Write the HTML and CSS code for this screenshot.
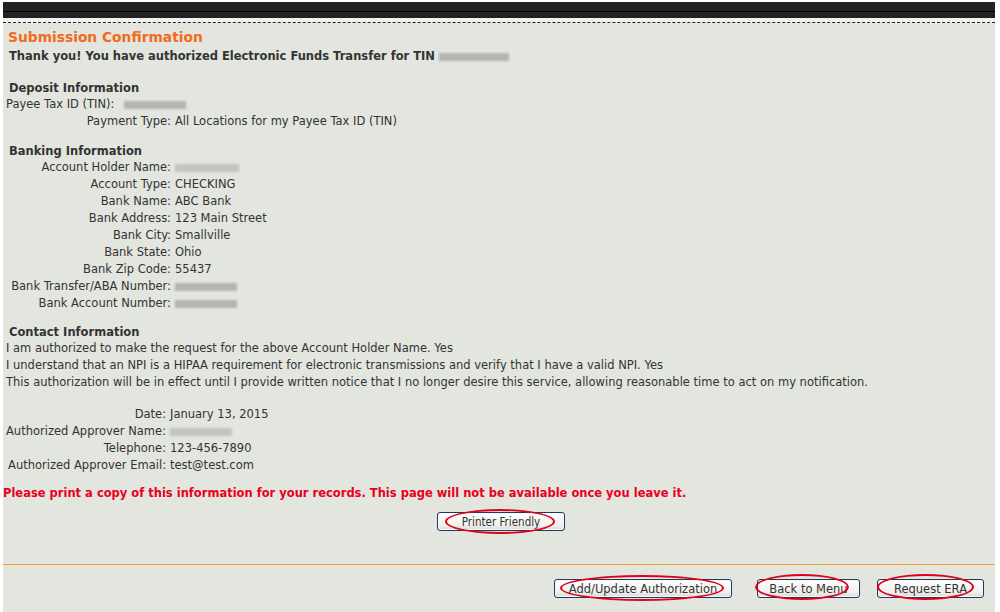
FILE: index.html
```html
<!DOCTYPE html>
<html>
<head>
<meta charset="utf-8">
<link rel="stylesheet" href="styles.css">
</head>
<body>
<div class="frame">
  <div class="topbar"><div class="topbar-line"></div></div>
  <div class="dash"></div>
  <div class="content">
    <h1 class="title">Submission Confirmation</h1>
    <p class="thanks">Thank you! You have authorized Electronic Funds Transfer for TIN <span class="blur w70"></span></p>

    <h2 class="sect first">Deposit Information</h2>
    <p class="plain">Payee Tax ID (TIN): <span class="blur w62 shift"></span></p>
    <table class="info">
      <tr><td class="lbl">Payment Type:</td><td>All Locations for my Payee Tax ID (TIN)</td></tr>
    </table>

    <h2 class="sect">Banking Information</h2>
    <table class="info">
      <tr><td class="lbl">Account Holder Name:</td><td><span class="blur w64 light"></span></td></tr>
      <tr><td class="lbl">Account Type:</td><td>CHECKING</td></tr>
      <tr><td class="lbl">Bank Name:</td><td>ABC Bank</td></tr>
      <tr><td class="lbl">Bank Address:</td><td>123 Main Street</td></tr>
      <tr><td class="lbl">Bank City:</td><td>Smallville</td></tr>
      <tr><td class="lbl">Bank State:</td><td>Ohio</td></tr>
      <tr><td class="lbl">Bank Zip Code:</td><td>55437</td></tr>
      <tr><td class="lbl">Bank Transfer/ABA Number:</td><td><span class="blur w62"></span></td></tr>
      <tr><td class="lbl">Bank Account Number:</td><td><span class="blur w62"></span></td></tr>
    </table>

    <h2 class="sect contact-h">Contact Information</h2>
    <p class="plain">I am authorized to make the request for the above Account Holder Name. Yes</p>
    <p class="plain">I understand that an NPI is a HIPAA requirement for electronic transmissions and verify that I have a valid NPI. Yes</p>
    <p class="plain">This authorization will be in effect until I provide written notice that I no longer desire this service, allowing reasonable time to act on my notification.</p>

    <table class="info contact">
      <tr><td class="lbl">Date:</td><td>January 13, 2015</td></tr>
      <tr><td class="lbl">Authorized Approver Name:</td><td><span class="blur w62 light"></span></td></tr>
      <tr><td class="lbl">Telephone:</td><td>123-456-7890</td></tr>
      <tr><td class="lbl">Authorized Approver Email:</td><td>test@test.com</td></tr>
    </table>

    <p class="warn">Please print a copy of this information for your records. This page will not be available once you leave it.</p>

    <div class="center-row">
      <span class="btn-wrap"><button class="btn pf">Printer Friendly</button><span class="ring r-pf"></span></span>
    </div>
  </div>
  <div class="footer">
    <span class="btn-wrap"><button class="btn add">Add/Update Authorization</button><span class="ring r-add"></span></span>
    <span class="btn-wrap"><button class="btn menu">Back to Menu</button><span class="ring r-menu"></span></span>
    <span class="btn-wrap"><button class="btn era">Request ERA</button><span class="ring r-era"></span></span>
  </div>
</div>
</body>
</html>
```
FILE: styles.css
```css
html, body {
  margin: 0;
  padding: 0;
  background: #ffffff;
}
body {
  font-family: "DejaVu Sans", Verdana, sans-serif;
  font-size: 11.5px;
  color: #333333;
}
.frame {
  margin: 2px 5px 0 3px;
  width: 992px;
  height: 610px;
  background: #e3e5df;
  display: flex;
  flex-direction: column;
}
.topbar {
  height: 16px;
  background: #222222;
  display: flex;
  flex-direction: column;
  justify-content: center;
}
.topbar-line {
  height: 1px;
  background: #000000;
  margin-top: 2px;
}
.dash {
  height: 4px;
  background: #f0f1ee;
  border-bottom: 1px dashed #222222;
}
.content {
  padding: 0 0 0 3px;
  flex: 1;
}
.title {
  margin: 5px 0 0 2px;
  font-size: 13.8px;
  line-height: 18px;
  font-weight: bold;
  color: #f26b1d;
}
.thanks {
  margin: 2px 0 0 3px;
  font-weight: bold;
  line-height: 17px;
  color: #333333;
}
.sect {
  margin: 13px 0 0 3px;
  font-size: 11.5px;
  line-height: 16px;
  font-weight: bold;
  color: #333333;
}
.sect.first {
  margin-top: 15px;
}
.sect.contact-h {
  margin-top: 12px;
}
.info {
  border-collapse: collapse;
}
.info td {
  padding: 0;
  height: 17px;
  line-height: 17px;
  white-space: nowrap;
  vertical-align: middle;
}
.info td.lbl {
  width: 165px;
  text-align: right;
  padding-right: 4px;
}
.contact {
  margin-top: 15px;
}
.contact td.lbl {
  width: 160px;
}
.plain {
  margin: 0;
  line-height: 17px;
}
.blur {
  display: inline-block;
  height: 8px;
  vertical-align: middle;
  background: #b4b4b2;
  filter: blur(1.2px);
}
.blur.light {
  background: #c4c4c2;
}
.blur.shift {
  margin-left: 6px;
}
.w70 { width: 70px; }
.w62 { width: 62px; }
.w64 { width: 64px; }
.warn {
  margin: 11px 0 0 -3px;
  font-weight: bold;
  color: #e8001c;
  line-height: 17px;
}
.center-row {
  display: flex;
  justify-content: center;
  margin-top: 10px;
  padding-left: 1px;
}
.btn-wrap {
  position: relative;
  display: inline-block;
}
.btn {
  font-family: "DejaVu Sans", sans-serif;
  font-size: 11.5px;
  color: #333333;
  height: 19px;
  padding: 0;
  border: 1px solid #1d3a63;
  border-radius: 3px;
  background: linear-gradient(#ffffff, #f0f0ec 70%, #d9dbd6);
  box-shadow: inset 0 0 0 1px #f7f7f5;
}
.btn.pf {
  width: 128px;
  font-family: "DejaVu Sans Condensed", "DejaVu Sans", sans-serif;
  font-size: 11.5px;
}
.btn.add { width: 178px; }
.btn.menu { width: 103px; }
.btn.era { width: 107px; }
.ring {
  position: absolute;
  border: 2.5px solid #e0001b;
  border-radius: 50%;
  pointer-events: none;
}
.r-pf { left: 8px; top: -3px; width: 106px; height: 21px; }
.r-add { left: 6px; top: -4px; width: 160px; height: 22px; }
.r-menu { left: -2px; top: -5px; width: 90px; height: 22px; }
.r-era { left: 0px; top: -5px; width: 93px; height: 22px; }
.footer {
  border-top: 1px solid #f0a22a;
  height: 48px;
  display: flex;
  justify-content: flex-end;
  align-items: flex-start;
  gap: 24px;
  padding: 14px 11px 0 0;
  box-sizing: border-box;
}
.footer .btn-wrap:nth-child(2) { margin-left: 1px; }
.footer .btn-wrap:nth-child(3) { margin-left: -7px; }
```
